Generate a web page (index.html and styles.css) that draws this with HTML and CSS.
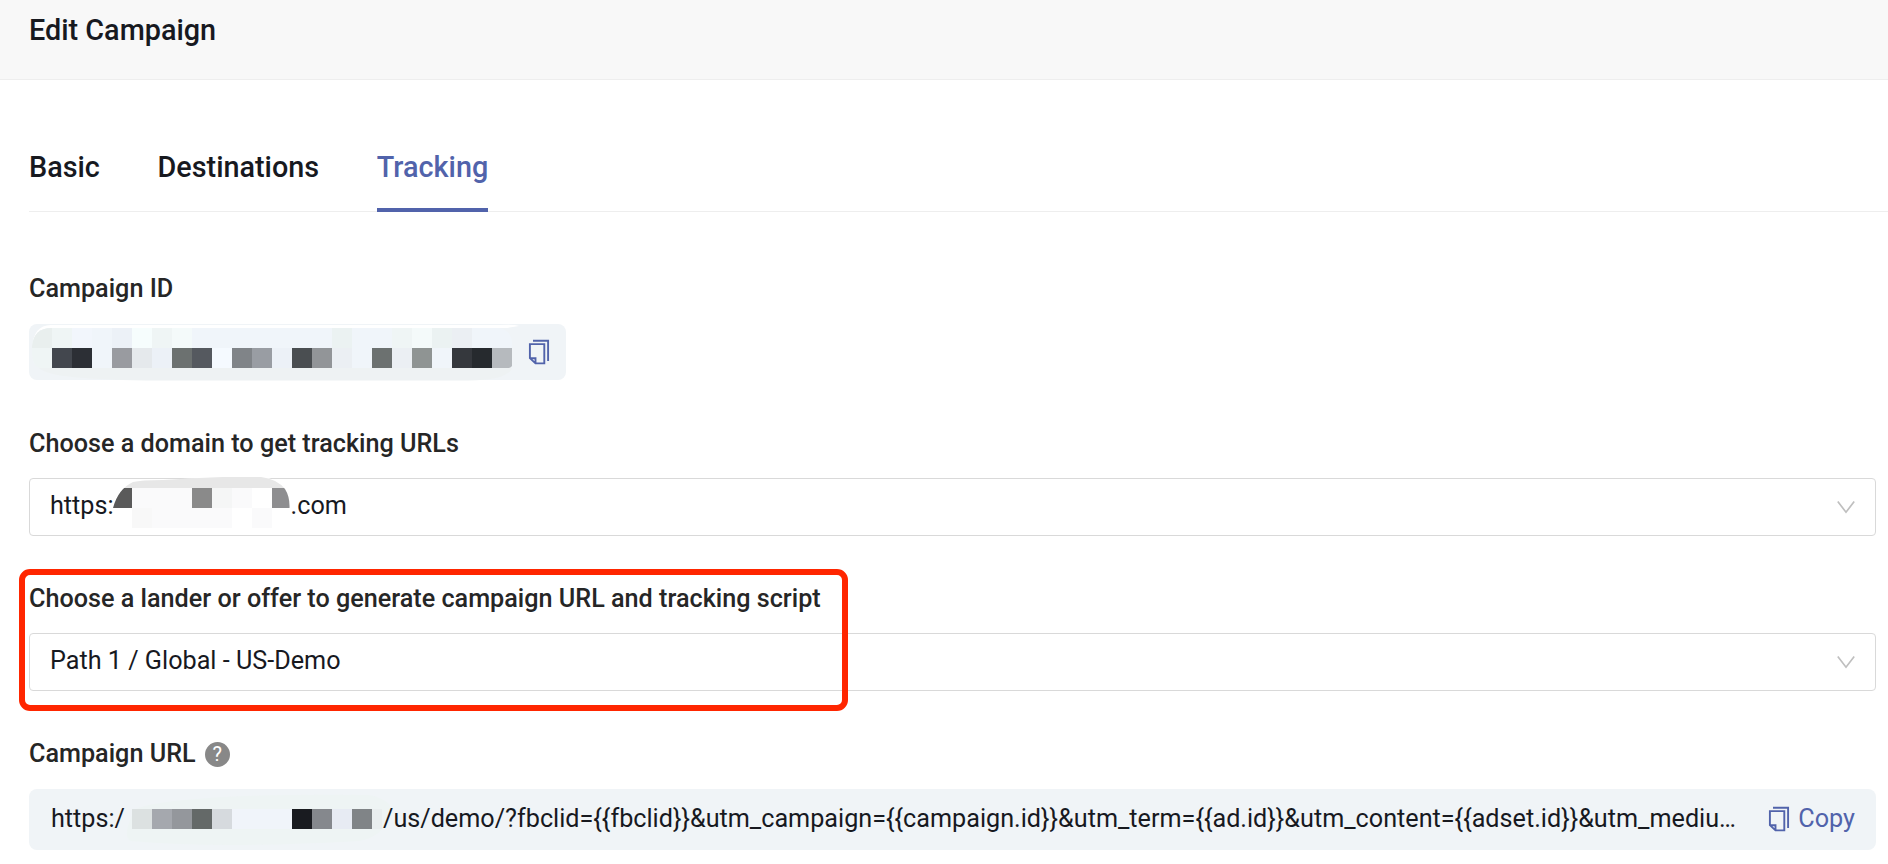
FILE: index.html
```html
<!DOCTYPE html>
<html lang="en">
<head>
<meta charset="utf-8">
<title>Edit Campaign</title>
<link rel="stylesheet" href="styles.css">
</head>
<body>
<svg class="defs" width="0" height="0">
  <symbol id="copy" viewBox="0 0 22 26">
    <path d="M5 1.8H20.1V22M1.9 5.1H16.3V24.4H7.5L1.9 19.2ZM1.9 19.2H7.5V24.4" fill="none" stroke="#5163ab" stroke-width="1.9"/>
  </symbol>
  <symbol id="chevron" viewBox="0 0 18 13">
    <path d="M.8.6 9 11.2 17.2.6" fill="none" stroke="#bfbfbf" stroke-width="1.7"/>
  </symbol>
</svg>
<header class="header"><h1 class="title">Edit Campaign</h1></header>
<main class="content">
  <nav class="tabs">
    <a class="tab">Basic</a>
    <a class="tab">Destinations</a>
    <a class="tab active">Tracking</a>
  </nav>

  <section class="field first">
    <div class="label">Campaign ID</div>
    <div class="id-box">
      <svg class="mask" width="537" height="60">
        <path d="M3 25Q4 1 22 1H470Q485 0 490 2L478 4H22Q8 5 4 30Z" fill="#fff"/>
        <path d="M10 44H483Q479 56 440 56.500H130Q20 56 10 44Z" fill="#eef2f3"/>
        <clipPath id="c1"><path d="M3 22Q5 4 22 4H470Q482 6 483.500 20V40Q483 44 479 44H10Q3 40 3 30Z"/></clipPath>
        <g clip-path="url(#c1)">
          <path fill="#f0f5fa" d="M3 4H483V44H3Z"/>
          <path fill="#e9efee" d="M3 4h20v20H3z"/><path fill="#eff5f5" d="M23 4h20v20H23zM3 24h20v20H3z"/>
          <path fill="#f2f6fc" d="M43 4h20v20H43z"/><path fill="#ecf1f7" d="M83 4h20v20H83zM123 24h20v20h-20zM243 24h20v20h-20z"/>
          <path fill="#f6fdfd" d="M103 4h20v20h-20z"/><path fill="#eff5f5" d="M123 4h20v20h-20zM363 4h20v20h-20z"/><path fill="#f4fafa" d="M143 4h20v20h-20zM383 4h20v20h-20z"/>
          <path fill="#ebf2f2" d="M303 4h20v20h-20zM403 4h20v20h-20z"/><path fill="#ebeff3" d="M423 4h20v20h-20zM303 24h20v20h-20zM363 24h20v20h-20z"/>
          <path fill="#43474e" d="M23 24h20v20H23z"/><path fill="#2c2f35" d="M43 24h20v20H43z"/><path fill="#999ba0" d="M83 24h20v20H83z"/><path fill="#e5e9ec" d="M103 24h20v20h-20z"/>
          <path fill="#6c7170" d="M143 24h20v20h-20zM343 24h20v20h-20z"/><path fill="#55595f" d="M163 24h20v20h-20z"/><path fill="#f5faff" d="M183 24h20v20h-20z"/>
          <path fill="#808488" d="M203 24h20v20h-20z"/><path fill="#999da3" d="M223 24h20v20h-20z"/><path fill="#4a4e51" d="M263 24h20v20h-20z"/><path fill="#929598" d="M283 24h20v20h-20z"/>
          <path fill="#8f9493" d="M383 24h20v20h-20z"/><path fill="#35383d" d="M423 24h20v20h-20z"/><path fill="#262a2e" d="M443 24h20v20h-20z"/><path fill="#b6babe" d="M463 24h20v20h-20z"/>
        </g>
      </svg>
      <svg class="copy-icon"><use href="#copy"/></svg>
    </div>
  </section>

  <section class="field">
    <div class="label">Choose a domain to get tracking URLs</div>
    <div class="select">
      <span class="value">https:<span class="gap-domain"></span>.com</span>
      <svg class="chevron"><use href="#chevron"/></svg>
      <svg class="mask domain-mask" width="180" height="62">
        <path d="M0 31Q5 12 20 6Q28 3 50 3Q90 1 120 0H150Q168 2 175 20Q177 28 176 37H160V56H30Q15 56 0 40Z" fill="#fff"/>
        <clipPath id="c2"><path d="M0 31Q5 12 20 5Q28 3 50 3Q80 1 110 0H148Q164 2 172 12Q177 20 176.500 31V52H0Z"/></clipPath>
        <g clip-path="url(#c2)">
          <path fill="#e7e7e7" d="M0 0H180V11H0Z"/><path fill="#fafafb" d="M19 11H159V51H19Z"/>
          <path fill="#5a5a5a" d="M0 11h19v20H0z"/><path fill="#8a8a8a" d="M79 11h20v20H79z"/><path fill="#8e8e90" d="M159 11h20v20h-20z"/>
          <path fill="#f5f6f6" d="M99 11h20v20H99z"/><path fill="#fff" d="M139 11h20v20h-20zM119 31h20v20h-20z"/><path fill="#f8f8f8" d="M19 31h20v20H19z"/>
        </g>
      </svg>
    </div>
  </section>

  <section class="field">
    <div class="label">Choose a lander or offer to generate campaign URL and tracking script</div>
    <div class="select">
      <span class="value">Path 1 / Global - US-Demo</span>
      <svg class="chevron"><use href="#chevron"/></svg>
    </div>
    <div class="highlight"></div>
  </section>

  <section class="field">
    <div class="label">Campaign URL <span class="help">?</span></div>
    <div class="url-box">
      <span class="url">https:/<span class="gap-url"></span>/us/demo/?fbclid={{fbclid}}&amp;utm_campaign={{campaign.id}}&amp;utm_term={{ad.id}}&amp;utm_content={{adset.id}}&amp;utm_mediu…</span>
      <a class="copy"><svg class="copy-icon"><use href="#copy"/></svg><span>Copy</span></a>
      <svg class="mask url-mask" width="276" height="61">
        <path d="M16 20Q60 4 250 6Q272 10 274 24Q264 48 240 52Q100 60 12 52Q2 48 16 20Z" fill="#eef4f4"/>
        <path fill="#dce1e1" d="M13 20h20v20H13z"/><path fill="#a5a8ae" d="M33 20h20v20H33z"/><path fill="#94979c" d="M53 20h20v20H53z"/><path fill="#646968" d="M73 20h20v20H73z"/><path fill="#d6dade" d="M93 20h20v20H93z"/>
        <path fill="#f0f4fa" d="M113 20h60v20h-60z"/><path fill="#191b20" d="M173 20h20v20h-20z"/><path fill="#85888d" d="M193 20h20v20h-20z"/><path fill="#e7ebf3" d="M213 20h20v20h-20z"/><path fill="#808487" d="M233 20h20v20h-20z"/><path fill="#e9eeef" d="M253 20h10v20h-10z"/>
      </svg>
    </div>
  </section>
</main>
</body>
</html>
```
FILE: styles.css
```css
* { box-sizing: border-box; }
body { margin: 0; height: 864px; overflow: hidden; background: #fff; color: #17191f; font: 25.2px/40px Roboto, "Liberation Sans", sans-serif; }
.defs { position: absolute; }
.header { height: 80px; padding: 10px 0 0 29px; background: #f8f8f8; border-bottom: 1px solid #eee; }
.title { margin: 0; font-size: 28.8px; font-weight: 500; line-height: 40px; }
.content { padding: 67px 0 0 29px; }
.tabs { display: flex; gap: 57.6px; height: 65px; border-bottom: 1px solid #eee; }
.tab { height: 65px; font-size: 28.8px; font-weight: 500; line-height: 40px; }
.tab.active { color: #5163ab; border-bottom: 4px solid #5163ab; }
.field { position: relative; height: 155px; padding-right: 12px; }
.field.first { margin-top: 57px; }
.label { display: flex; align-items: center; height: 40px; margin-bottom: 15px; color: #262626; font-weight: 500; }
.id-box { position: relative; display: flex; align-items: center; justify-content: flex-end; width: 537px; height: 56px; padding-right: 16px; border-radius: 8px; background: #f0f4f7; }
.copy-icon { width: 22px; height: 26px; flex: none; }
.mask { position: absolute; left: 0; top: 0; }
.select { position: relative; display: flex; align-items: center; justify-content: space-between; height: 58px; margin-top: 14px; padding: 0 20px; border: 1px solid #d9d9d9; border-radius: 4px; }
.label:has(+ .select) { margin-bottom: 0; }
.value { display: flex; padding-bottom: 2px; white-space: pre; }
.gap-domain { width: 177px; }
.domain-mask { left: 83px; top: -2px; }
.chevron { width: 18px; height: 13px; }
.highlight { position: absolute; left: -10px; top: -10px; width: 829px; height: 142px; border: 6px solid #ff2600; border-radius: 11px; }
.help { display: flex; align-items: center; justify-content: center; width: 25px; height: 25px; margin-left: 9px; border-radius: 50%; background: #888; color: #fff; font-size: 20px; font-weight: 400; line-height: 25px; }
.url-box { position: relative; display: flex; align-items: center; justify-content: space-between; height: 61px; padding: 0 21px 0 22px; border-radius: 8px; background: #f0f4f7; }
.url { position: relative; z-index: 1; display: flex; padding-bottom: 2px; white-space: pre; }
.gap-url { width: 258px; }
.url-mask { left: 90px; }
.copy { display: flex; align-items: center; gap: 8px; padding-bottom: 2px; color: #5163ab; }
```
